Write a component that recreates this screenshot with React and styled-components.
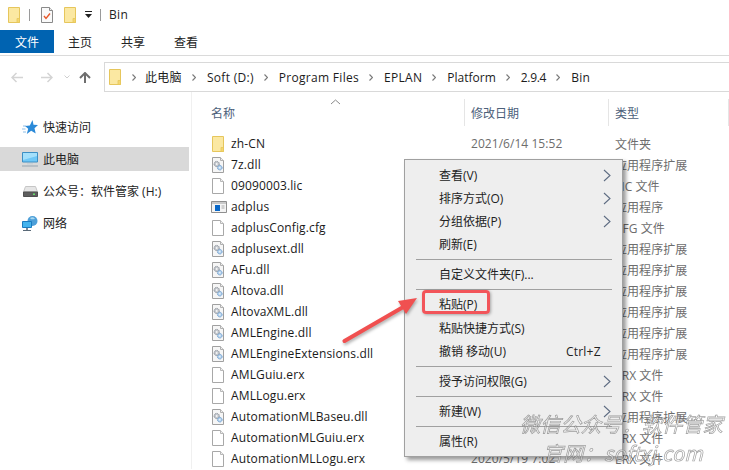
import React from 'react';
import styled, { createGlobalStyle } from 'styled-components';

const FONT = '"Open Sans", "Noto Sans CJK SC", sans-serif';

const Global = createGlobalStyle`
  html, body { margin: 0; padding: 0; background: #fff; }
  body { font-family: ${FONT}; font-size: 12px; color: #1a1a1a; }
  * { box-sizing: border-box; }
`;

const Window = styled.div`
  position: relative; width: 729px; height: 470px; overflow: hidden; background: #fff;
`;
const TitleBar = styled.div`
  display: flex; align-items: center; height: 30px; padding-left: 8px;
`;
const TitleSep = styled.span`
  width: 1px; height: 12px; background: #9a9a9a; margin: 0 ${p => p.$r}px 0 ${p => p.$l}px;
`;
const TitleSpacer = styled.span`
  width: 11px;
`;
const TitleText = styled.span`
  font-size: 12px; color: #222; line-height: 30px; letter-spacing: .3px;
`;
const Ribbon = styled.div`
  display: flex; height: 26px; border-bottom: 1px solid #dadada; align-items: flex-start;
`;
const FileTab = styled.div`
  width: 54px; height: 23px; background: #0063b1; color: #fff; display: flex; align-items: center; justify-content: center; padding-top: 1px;
`;
const Tab = styled.div`
  height: 23px; line-height: 25px; margin-left: ${p => p.$ml}px; color: #222;
`;
const AddressRow = styled.div`
  display: flex; align-items: center; height: 30px; margin-top: 6px;
`;
const NavIcons = styled.div`
  display: flex; align-items: center; width: 104px; padding-left: 11px; flex: none;
`;
const AddressBox = styled.div`
  flex: 1; height: 30px; border: 1px solid #d9d9d9; border-right: none; display: flex; align-items: center; padding-left: 4px; white-space: nowrap;
`;
const Crumb = styled.span`
  color: #1c1c1c; letter-spacing: ${p => p.$ls}px;
`;
const Body = styled.div`
  display: grid; grid-template-columns: 192px 1fr; height: 377px;
`;
const Sidebar = styled.div`
  display: flex; flex-direction: column; gap: 8px; padding-top: 23px; border-right: 1px solid #f0f0f0; padding-right: 2px;
`;
const NavItem = styled.div`
  display: flex; align-items: center; gap: 5px; height: 24px; padding-left: ${p => p.$pl || 22}px; background: ${p => (p.$active ? '#d9d9d9' : 'transparent')}; color: #222;
`;
const Main = styled.div`
  padding-top: 7px; min-width: 0;
`;
const Header = styled.div`
  position: relative; display: grid; grid-template-columns: 273px 144px 120px; height: 27px; margin-bottom: 7px; color: #4c607a;
`;
const HeaderCell = styled.div`
  display: flex; align-items: center; padding-left: ${p => p.$pl}px; height: 27px; border-right: 1px solid #e5e5e5;
`;
const SortCaret = styled.svg`
  position: absolute; left: 138px; top: 0; width: 11px; height: 6px;
`;
const Row = styled.div`
  display: grid; grid-template-columns: 19px 240px 144px 1fr; height: 21px; align-items: center; padding-left: 20px; white-space: nowrap;
`;
const IconSlot = styled.span`
  display: flex; align-items: center;
`;
const Name = styled.span`
  color: #1a1a1a; letter-spacing: .13px;
`;
const Meta = styled.span`
  color: #6d6d6d; letter-spacing: .05px;
`;
const Menu = styled.div`
  position: absolute; left: 404px; top: 159px; width: 219px; height: 298px; background: #eeeeee; border: 1px solid #a0a0a0; box-shadow: 3px 3px 4px rgba(0,0,0,.4); padding: 4px 0 0 1px; color: #222;
`;
const MenuItem = styled.div`
  position: relative; height: 23px; line-height: 23px; padding-left: 33px; white-space: nowrap; margin-top: ${p => p.$mt || 0}px;
`;
const MenuChevron = styled.svg`
  position: absolute; right: 11px; top: 5px; width: 8px; height: 13px;
`;
const Shortcut = styled.span`
  position: absolute; left: 160px; top: 0; letter-spacing: .2px;
`;
const MenuSep = styled.div`
  height: 7px; margin: 0 10px; display: flex; align-items: center;
  &::after { content: ''; display: block; width: 100%; height: 1px; background: #a0a0a0; }
`;
const Highlight = styled.div`
  position: absolute; left: 422px; top: 290px; width: 68px; height: 24px; border: 3px solid #f2555a; border-radius: 4px; box-shadow: 1px 1px 3px rgba(0,0,0,.3);
`;
const ArrowSvg = styled.svg`
  position: absolute; left: 335px; top: 290px; width: 90px; height: 60px; overflow: visible; filter: drop-shadow(1px 2px 1.5px rgba(0,0,0,.3));
`;
const Watermark = styled.div`
  position: absolute; left: ${p => p.$x}px; top: ${p => p.$y}px; font-size: ${p => p.$s}px; line-height: 1; white-space: nowrap;
  color: rgba(255,255,255,.4); -webkit-text-stroke: .7px rgba(110,110,110,.65); font-style: italic; filter: blur(.3px);
  letter-spacing: ${p => p.$ls || 0}px; font-family: "Noto Sans CJK SC", "Open Sans", sans-serif;
`;

const Folder = ({ w = 12, h = 16 }) => (
  <svg width={w} height={h} viewBox="0 0 12 16">
    <path d="M.5.5h11v15H.5z" fill="#fbe8a2" stroke="#e6c65c" />
    <path d="M9 11.5h2.5v4H9z" fill="#f5d76e" stroke="#e6c65c" strokeWidth=".8" />
  </svg>
);
const CheckDoc = () => (
  <svg width="12" height="16" viewBox="0 0 12 16">
    <path d="M.5.5h8l3 3v12H.5z" fill="#fafafa" stroke="#8a8a8a" />
    <path d="M8.5.5v3h3" fill="#eee" stroke="#8a8a8a" />
    <path d="M3 9l2 2.5 4-5" fill="none" stroke="#e8582a" strokeWidth="1.4" />
  </svg>
);
const BlankFile = () => (
  <svg width="12" height="16" viewBox="0 0 12 16">
    <path d="M.5.5h8l3 3v12H.5z" fill="#fff" stroke="#a8a8a8" />
    <path d="M8.5.5v3h3" fill="#f0f0f0" stroke="#b8b8b8" />
  </svg>
);
const DllFile = () => (
  <svg width="12" height="16" viewBox="0 0 12 16">
    <path d="M.5.5h8l3 3v12H.5z" fill="#f6f6f6" stroke="#a0a0a0" />
    <path d="M8.500.5v3h3" fill="#eee" stroke="#b0b0b0" />
    <circle cx="4.700" cy="7" r="2.600" fill="#c4c8ce" stroke="#8a9098" strokeDasharray="1.200 .5" />
    <circle cx="4.700" cy="7" r=".9" fill="#f6f6f6" />
    <circle cx="7.800" cy="10.700" r="2.300" fill="#b4d2ee" stroke="#6d9ccc" strokeDasharray="1.200 .5" />
    <circle cx="7.800" cy="10.700" r=".8" fill="#f6f6f6" />
  </svg>
);
const AppIcon = styled.svg`
  margin-left: -1px;
`;
const AppFile = () => (
  <AppIcon width="16" height="12" viewBox="0 0 16 12">
    <path d="M.5.5h15v11H.5z" fill="#f4f4f4" stroke="#8f8f8f" />
    <path d="M1 1h14v2H1z" fill="#c9c9c9" />
    <path d="M4 4h5v6H4z" fill="#0a68c8" />
    <path d="M10.500 5h3M10.500 7h3" stroke="#aaa" />
  </AppIcon>
);
const Star = () => (
  <svg width="16" height="15" viewBox="0 0 16 15">
    <path d="M10.500 0l1 4.800 4.500.2-3.500 3.200 1.200 5.300L9.200 10.800 4.800 14l1.400-5.300L3 6l4.800-.6z" fill="#2b8ad8" />
    <path d="M1 6h3M0 9h3.500M1 12h3" stroke="#8cbde6" strokeWidth="1" />
  </svg>
);
const Monitor = () => (
  <svg width="16" height="15" viewBox="0 0 16 15">
    <path d="M.5.5h15v9.500H.5z" fill="#6fc8f7" stroke="#3d8fc4" />
    <path d="M1 1h14v3L1 8z" fill="#a4e0fb" />
    <path d="M0 14h16" stroke="#a4b0ba" strokeWidth="1.300" />
    <path d="M5 11h6v1.500H5z" fill="#c8d0d6" />
  </svg>
);
const Drive = () => (
  <svg width="15" height="11" viewBox="0 0 15 11">
    <path d="M2.500.5h10l2 5.500H.5z" fill="#e6e6e6" stroke="#c6c6c6" />
    <path d="M.5 6h14v4.500H.5z" fill="#5e5e5e" stroke="#4f4f4f" />
    <path d="M10 7.500h2v1.400h-2z" fill="#67e06a" />
  </svg>
);
const Network = () => (
  <svg width="16" height="15" viewBox="0 0 16 15">
    <circle cx="10.500" cy="5" r="5" fill="#4d9fd8" />
    <path d="M8 2c2-1.500 4-1 5 1-2 0-4 1-5-1z" fill="#a8d8f0" />
    <path d="M.5 5.500h9v6h-9z" fill="#45b4ee" stroke="#1d7cc0" />
    <path d="M1 14.500h8" stroke="#5a6a78" />
    <path d="M4 12h2v2H4z" fill="#7d8a96" />
  </svg>
);
const DropSvg = styled.svg`
  margin-left: 9px;
`;
const DropTri = () => (
  <DropSvg width="7" height="8" viewBox="0 0 7 8">
    <path d="M0 .5h7" stroke="#222" />
    <path d="M0 3h7L3.500 7z" fill="#222" />
  </DropSvg>
);
const NavSvg = styled.svg`
  margin-left: ${p => p.$ml || 0}px;
`;
const NavArrow = ({ d, color, ml, sw = 1.5 }) => (
  <NavSvg $ml={ml} width="12" height="11" viewBox="0 0 12 11">
    <path d={d} fill="none" stroke={color} strokeWidth={sw} />
  </NavSvg>
);
const ChevSvg = styled.svg`
  margin: 0 ${p => p.$mr}px 0 ${p => p.$ml}px;
`;
const CrumbChevron = ({ ml, mr }) => (
  <ChevSvg $ml={ml} $mr={mr} width="4" height="7" viewBox="0 0 4 7">
    <path d="M.5.5l3 3-3 3" fill="none" stroke="#7a7a7a" strokeWidth="1.200" />
  </ChevSvg>
);
const Chev = () => (
  <MenuChevron viewBox="0 0 8 13">
    <path d="M1 1l6 5.500-6 5.500" fill="none" stroke="#5e6c82" strokeWidth="1.100" />
  </MenuChevron>
);

const APP = '应用程序扩展';
const rows = [
  [Folder, 'zh-CN', '2021/6/14 15:52', '文件夹'],
  [DllFile, '7z.dll', '2020/5/19 7:02', APP],
  [BlankFile, '09090003.lic', '2020/5/19 7:02', 'LIC 文件'],
  [AppFile, 'adplus', '2020/5/19 7:02', '应用程序'],
  [BlankFile, 'adplusConfig.cfg', '2020/5/19 7:02', 'CFG 文件'],
  [DllFile, 'adplusext.dll', '2020/5/19 7:02', APP],
  [DllFile, 'AFu.dll', '2020/5/19 7:02', APP],
  [DllFile, 'Altova.dll', '2020/5/19 7:02', APP],
  [DllFile, 'AltovaXML.dll', '2020/5/19 7:02', APP],
  [DllFile, 'AMLEngine.dll', '2020/5/19 7:02', APP],
  [DllFile, 'AMLEngineExtensions.dll', '2020/5/19 7:02', APP],
  [BlankFile, 'AMLGuiu.erx', '2020/5/19 7:02', 'ERX 文件'],
  [BlankFile, 'AMLLogu.erx', '2020/5/19 7:02', 'ERX 文件'],
  [DllFile, 'AutomationMLBaseu.dll', '2020/5/19 7:02', APP],
  [BlankFile, 'AutomationMLGuiu.erx', '2020/5/19 7:02', 'ERX 文件'],
  [BlankFile, 'AutomationMLLogu.erx', '2020/5/19 7:02', 'ERX 文件'],
];

const crumbs = [
  ['此电脑', .3], ['Soft (D:)', .3], ['Program Files', .3], ['EPLAN', .3], ['Platform', 0], ['2.9.4', -.3], ['Bin', .3],
];

export default function App() {
  return (
    <Window>
      <Global />
      <TitleBar>
        <Folder />
        <TitleSep $l={9} $r={11} />
        <CheckDoc />
        <TitleSpacer />
        <Folder />
        <DropTri />
        <TitleSep $l={8} $r={8} />
        <TitleText>Bin</TitleText>
      </TitleBar>
      <Ribbon>
        <FileTab>文件</FileTab>
        <Tab $ml={14}>主页</Tab>
        <Tab $ml={29}>共享</Tab>
        <Tab $ml={29}>查看</Tab>
      </Ribbon>
      <AddressRow>
        <NavIcons>
          <NavArrow d="M12 5.500H1M5.500 1L1 5.500l4.500 4.500" color="#d4d4d4" />
          <NavArrow d="M0 5.500h11M6.500 1L11 5.500 6.500 10" color="#d4d4d4" ml={18} />
          <NavSvg $ml={11} width="6" height="4" viewBox="0 0 6 4"><path d="M.5.500L3 3 5.500.500" fill="none" stroke="#cfcfcf" /></NavSvg>
          <NavArrow d="M6 11V1M1 6l5-5 5 5" color="#6e6e6e" ml={9} sw={2} />
        </NavIcons>
        <AddressBox>
          <Folder />
          <CrumbChevron ml={11} mr={9} />
          {crumbs.map(([t, ls], i) => (
            <React.Fragment key={t}>
              <Crumb $ls={ls}>{t}</Crumb>
              {i < crumbs.length - 1 && <CrumbChevron ml={10} mr={11} />}
            </React.Fragment>
          ))}
        </AddressBox>
      </AddressRow>
      <Body>
        <Sidebar>
          <NavItem><Star />快速访问</NavItem>
          <NavItem $active><Monitor />此电脑</NavItem>
          <NavItem $pl={23}><Drive />{'公众号\uFF1A软件管家 (H:)'}</NavItem>
          <NavItem><Network />网络</NavItem>
        </Sidebar>
        <Main>
          <Header>
            <HeaderCell $pl={19}>名称</HeaderCell>
            <HeaderCell $pl={6}>修改日期</HeaderCell>
            <HeaderCell $pl={6}>类型</HeaderCell>
            <SortCaret viewBox="0 0 11 6"><path d="M1 5l4.500-4L10 5" fill="none" stroke="#8a8a8a" /></SortCaret>
          </Header>
          {rows.map(([Ic, n, d, t]) => (
            <Row key={n}>
              <IconSlot><Ic /></IconSlot>
              <Name>{n}</Name>
              <Meta>{d}</Meta>
              <Meta>{t}</Meta>
            </Row>
          ))}
        </Main>
      </Body>
      <Menu>
        <MenuItem>查看(V)<Chev /></MenuItem>
        <MenuItem>排序方式(O)<Chev /></MenuItem>
        <MenuItem>分组依据(P)<Chev /></MenuItem>
        <MenuItem>刷新(E)</MenuItem>
        <MenuSep />
        <MenuItem>自定义文件夹(F)...</MenuItem>
        <MenuSep />
        <MenuItem>粘贴(P)</MenuItem>
        <MenuItem $mt={1}>粘贴快捷方式(S)</MenuItem>
        <MenuItem>撤销 移动(U)<Shortcut>Ctrl+Z</Shortcut></MenuItem>
        <MenuSep />
        <MenuItem>授予访问权限(G)<Chev /></MenuItem>
        <MenuSep />
        <MenuItem>新建(W)<Chev /></MenuItem>
        <MenuSep />
        <MenuItem>属性(R)</MenuItem>
      </Menu>
      <Highlight />
      <ArrowSvg viewBox="0 0 90 60">
        <path d="M9.500 51L70 16" stroke="#f05050" strokeWidth="4" strokeLinecap="round" />
        <path d="M82 8L63 11l8 13z" fill="#f05050" />
      </ArrowSvg>
      <Watermark $x={520} $y={413} $s={20.3}>{'微信公众号\uFF1A软件管家'}</Watermark>
      <Watermark $x={543} $y={443} $s={20} $ls={.3}>{'官网\uFF1Asoftxj.com'}</Watermark>
    </Window>
  );
}
